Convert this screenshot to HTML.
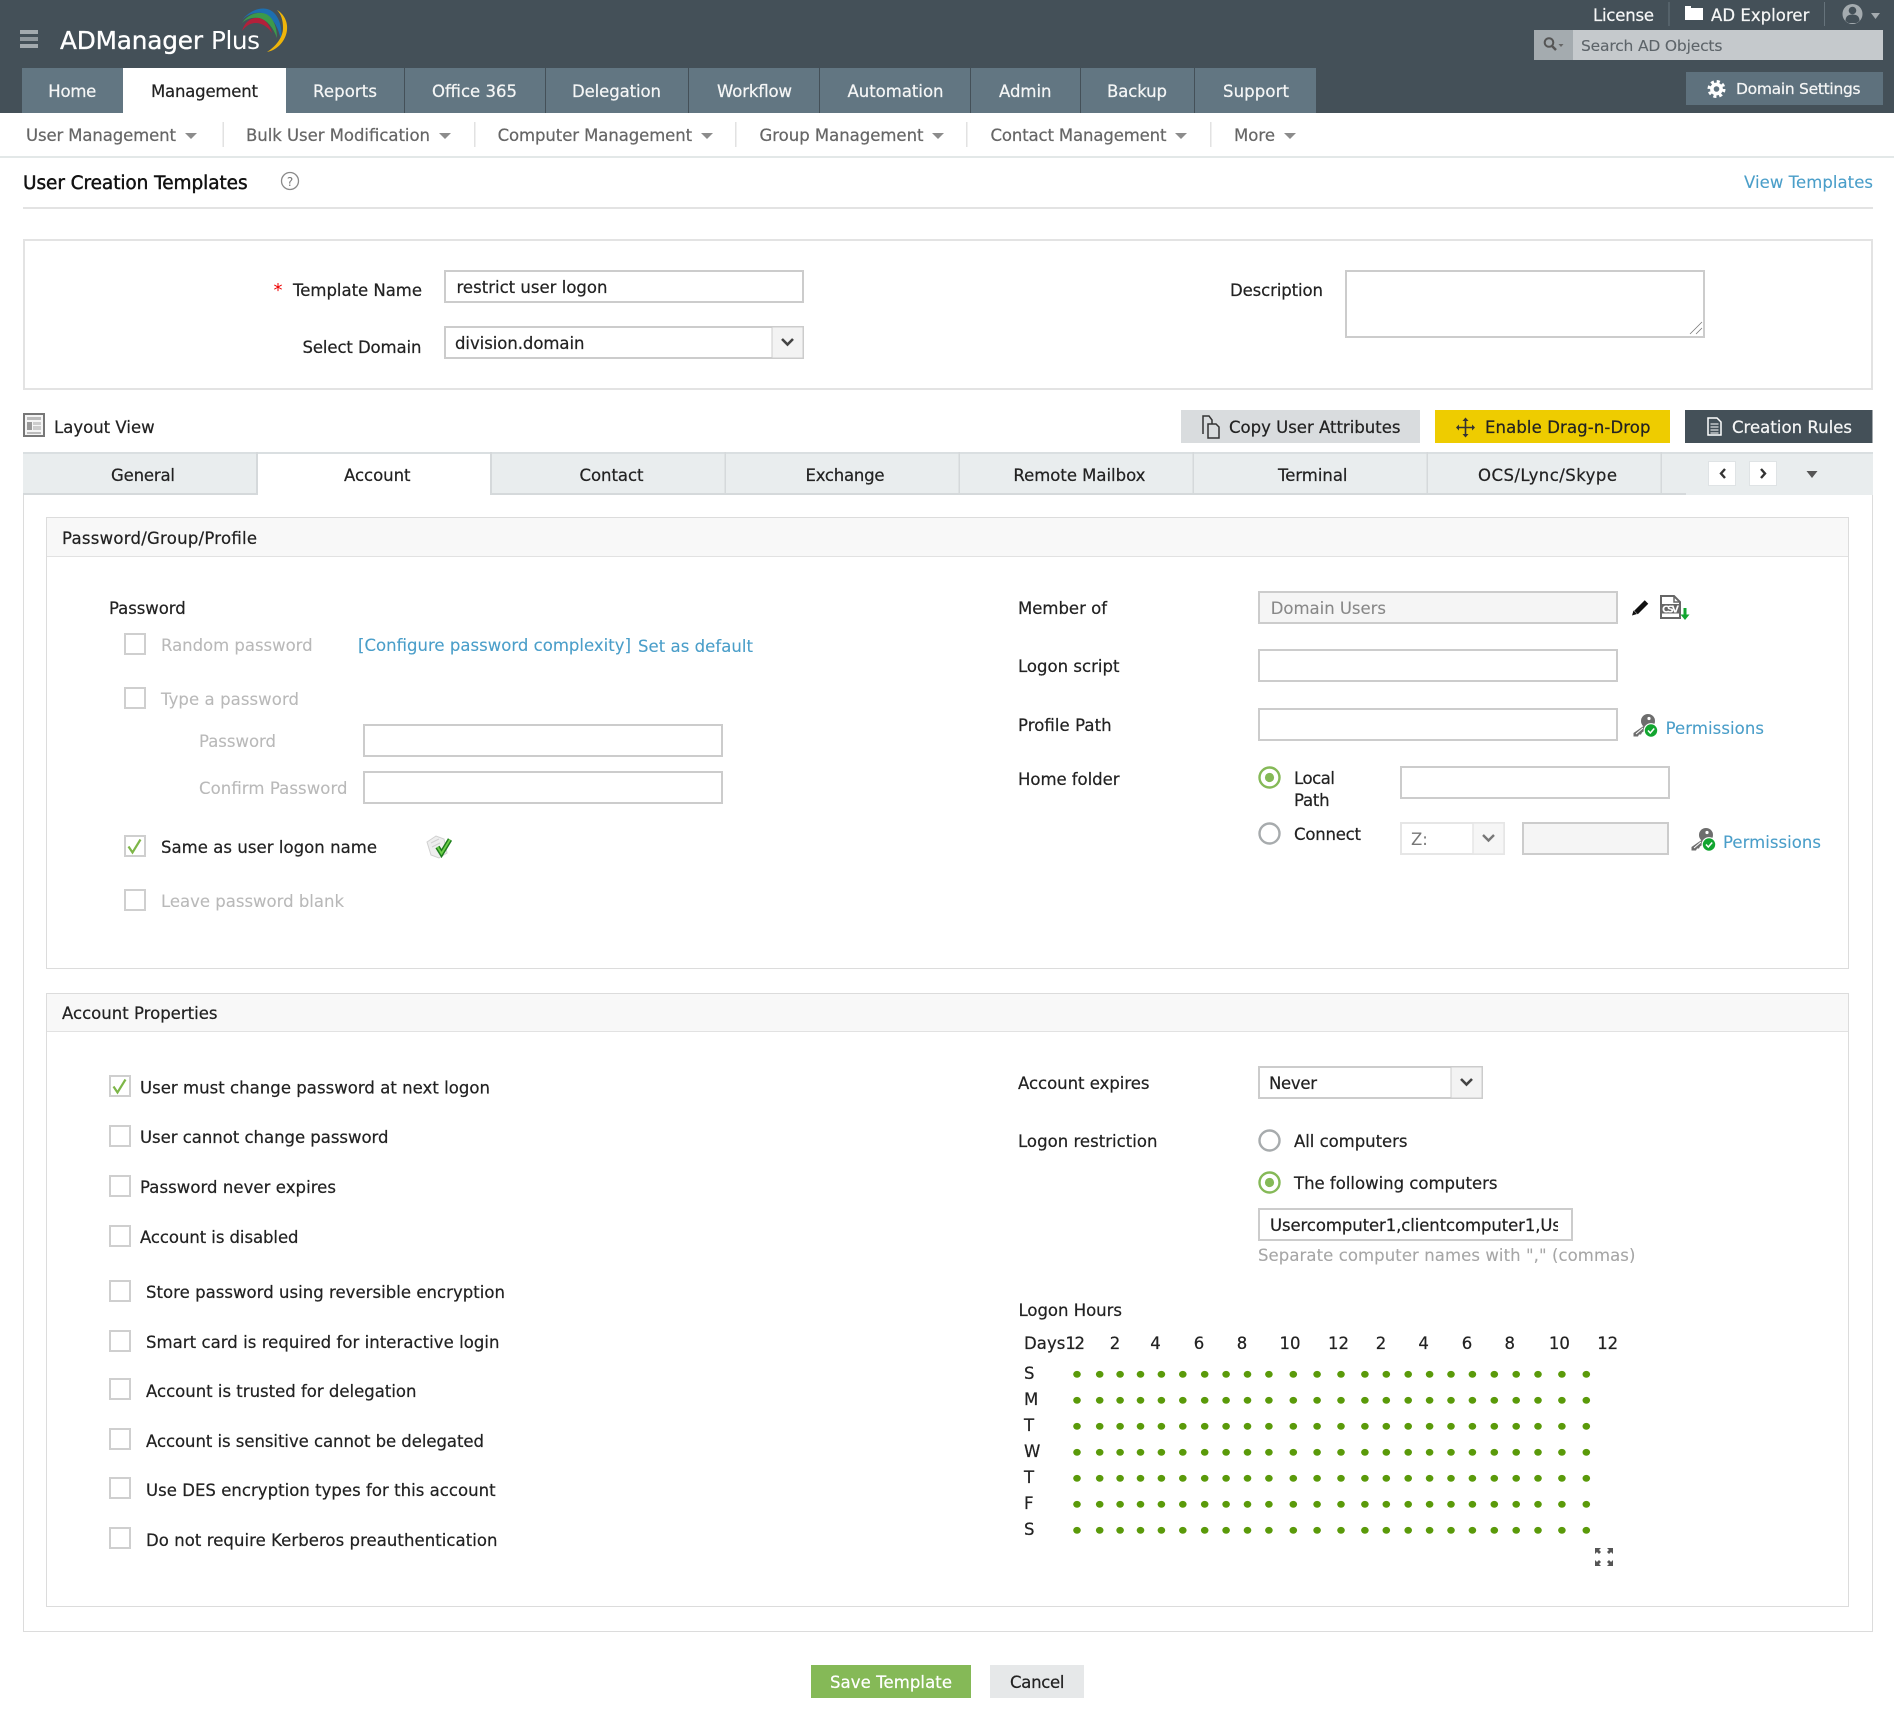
<!DOCTYPE html>
<html lang="en"><head><meta charset="utf-8"><title>User Creation Templates</title>
<style>
html,body{margin:0;padding:0;background:#fff;width:1894px;height:1728px;overflow:hidden}
svg{display:block}
text{font-family:"DejaVu Sans","Liberation Sans",sans-serif;font-size:16.5px;fill:#222;stroke:#222;stroke-width:.22px}
.w{fill:#fff;stroke:#fff}.g{fill:#666;stroke:#666}.d{fill:#b9b9b9;stroke:#b9b9b9;stroke-width:.1px}.b{fill:#4a9ec9;stroke:#4a9ec9;stroke-width:.1px}.h{fill:#f5f6f6;stroke:#f5f6f6}
.s{font-size:15.5px}
</style></head><body>
<svg xmlns="http://www.w3.org/2000/svg" width="1894" height="1728" viewBox="0 0 1894 1728">
<defs>
<g id="cb"><rect x="1" y="1" width="20" height="20" fill="#fff" stroke="#cfcfcf" stroke-width="2"/></g>
<g id="ck"><rect x="1" y="1" width="20" height="20" fill="#fff" stroke="#cfcfcf" stroke-width="2"/><path d="M4.500 11.500l4 6L16.500 4.500" fill="none" stroke="#7db648" stroke-width="2.200"/></g>
<g id="ro"><circle cx="11.500" cy="11.500" r="10" fill="#fff" stroke="#a7abad" stroke-width="2.400"/></g>
<g id="rs"><circle cx="11.500" cy="11.500" r="10" fill="#fff" stroke="#85b957" stroke-width="2.400"/><circle cx="11.500" cy="11.500" r="4.600" fill="#85b957"/></g>
<g id="key"><circle cx="16" cy="7" r="7" fill="#6d6d6d"/><circle cx="17" cy="4.500" r="1.600" fill="#fff"/><path d="M13 11L1.500 19v3.500H6l1-2h2l1-2 6-4z" fill="#6d6d6d"/><path d="M11 14l-7 6" stroke="#fff" stroke-width="1"/><circle cx="19" cy="16.500" r="6.800" fill="#12a530" stroke="#fff" stroke-width="1.200"/><path d="M16 16.500l2.300 2.500 3.900-4.500" fill="none" stroke="#fff" stroke-width="1.500"/></g>
<g id="r">
<ellipse cx="1077" rx="3.800" ry="3.400" fill="#5a9a0a"/><ellipse cx="1099.700" rx="3.800" ry="3.400" fill="#5a9a0a"/><ellipse cx="1120.100" rx="3.800" ry="3.400" fill="#5a9a0a"/><ellipse cx="1140.500" rx="3.800" ry="3.400" fill="#5a9a0a"/><ellipse cx="1161.400" rx="3.800" ry="3.400" fill="#5a9a0a"/><ellipse cx="1182.800" rx="3.800" ry="3.400" fill="#5a9a0a"/><ellipse cx="1204.700" rx="3.800" ry="3.400" fill="#5a9a0a"/><ellipse cx="1226.100" rx="3.800" ry="3.400" fill="#5a9a0a"/><ellipse cx="1247.500" rx="3.800" ry="3.400" fill="#5a9a0a"/><ellipse cx="1268.900" rx="3.800" ry="3.400" fill="#5a9a0a"/><ellipse cx="1293.300" rx="3.800" ry="3.400" fill="#5a9a0a"/><ellipse cx="1317.100" rx="3.800" ry="3.400" fill="#5a9a0a"/><ellipse cx="1341" rx="3.800" ry="3.400" fill="#5a9a0a"/><ellipse cx="1364.900" rx="3.800" ry="3.400" fill="#5a9a0a"/><ellipse cx="1386.300" rx="3.800" ry="3.400" fill="#5a9a0a"/><ellipse cx="1408.200" rx="3.800" ry="3.400" fill="#5a9a0a"/><ellipse cx="1429.600" rx="3.800" ry="3.400" fill="#5a9a0a"/><ellipse cx="1451" rx="3.800" ry="3.400" fill="#5a9a0a"/><ellipse cx="1472.400" rx="3.800" ry="3.400" fill="#5a9a0a"/><ellipse cx="1494.300" rx="3.800" ry="3.400" fill="#5a9a0a"/><ellipse cx="1516.200" rx="3.800" ry="3.400" fill="#5a9a0a"/><ellipse cx="1538" rx="3.800" ry="3.400" fill="#5a9a0a"/><ellipse cx="1561.900" rx="3.800" ry="3.400" fill="#5a9a0a"/><ellipse cx="1586.300" rx="3.800" ry="3.400" fill="#5a9a0a"/>
</g>
<clipPath id="cp"><rect x="1262" y="1210" width="296" height="29"/></clipPath>
</defs>

<!-- header -->
<rect width="1894" height="113" fill="#445058"/>
<rect x="20" y="30" width="18" height="4" fill="#a3aaae"/><rect x="20" y="37" width="18" height="4" fill="#8f979c"/><rect x="20" y="44" width="18" height="4" fill="#a3aaae"/>
<text x="60" y="49" textLength="143" style="font-size:24.700px;stroke-width:.35px" class="w">ADManager</text>
<text x="211" y="49" textLength="49" style="font-size:24.700px;stroke-width:0" class="w">Plus</text>
<path d="M242 20C250 10 262 6 270 10C278 14 283 26 281 40C278 26 272 16 262 13C254 12 247 15 242 20Z" fill="#1d6fb0"/>
<path d="M242 23C248 14 258 11 266 14C273 17 277 27 277 38C273 27 267 20 259 18C252 17 246 19 242 23Z" fill="#3b9a4b"/>
<path d="M242 31C245 21 252 17 259 18C265 19 270 25 272 33C268 27 262 23 256 23C250 23 246 26 242 31Z" fill="#b3203a"/>
<path d="M277 10C284 14 288 22 287 30C286 40 278 50 267 52C275 47 283 38 283 28C283 20 281 14 277 10Z" fill="#efb50a"/>

<rect x="22" y="68" width="101" height="45" fill="#627682"/><text x="48.300" y="97" textLength="48" class="h">Home</text>
<rect x="123" y="68" width="163" height="45" fill="#fff"/><text x="151" y="97" textLength="107">Management</text>
<rect x="286" y="68" width="118" height="45" fill="#627682"/><text x="313" y="97" textLength="64" class="h">Reports</text>
<rect x="405" y="68" width="140" height="45" fill="#627682"/><text x="432" y="97" textLength="85" class="h">Office 365</text>
<rect x="546" y="68" width="142" height="45" fill="#627682"/><text x="572" y="97" textLength="89" class="h">Delegation</text>
<rect x="689" y="68" width="130" height="45" fill="#627682"/><text x="717" y="97" textLength="75" class="h">Workflow</text>
<rect x="820" y="68" width="150" height="45" fill="#627682"/><text x="847.500" y="97" textLength="96" class="h">Automation</text>
<rect x="971" y="68" width="109" height="45" fill="#627682"/><text x="999" y="97" textLength="52.500" class="h">Admin</text>
<rect x="1081" y="68" width="113" height="45" fill="#627682"/><text x="1107" y="97" textLength="60" class="h">Backup</text>
<rect x="1195" y="68" width="121" height="45" fill="#627682"/><text x="1223" y="97" textLength="66" class="h">Support</text>

<text x="1593" y="21" textLength="61" class="h">License</text>
<rect x="1668.500" y="2" width="1" height="24" fill="#66737b"/>
<path d="M1685 6h6v2h12v12h-18z" fill="#fff"/>
<text x="1711" y="21" textLength="98.400" class="h">AD Explorer</text>
<rect x="1824" y="2" width="1" height="24" fill="#66737b"/>
<circle cx="1852.500" cy="14" r="10" fill="#a4abaf"/><circle cx="1852.500" cy="10.500" r="3.800" fill="#445058"/><path d="M1845.500 21c0-5 3-6.500 7-6.500s7 1.500 7 6.500l-3 2h-8z" fill="#445058"/>
<path d="M1871 13h9l-4.500 6z" fill="#a4abaf"/>
<rect x="1534" y="30" width="39" height="30" fill="#a4abaf"/><rect x="1573" y="30" width="310" height="30" fill="#c5c9cc"/>
<circle cx="1549" cy="42.500" r="4.300" fill="none" stroke="#555" stroke-width="2"/><path d="M1552 46l4 4" stroke="#555" stroke-width="2.500"/><path d="M1558.500 44h5l-2.500 3z" fill="#666"/>
<text x="1581" y="51" textLength="141.400" class="s" style="fill:#5d6469;stroke:#5d6469;stroke-width:.1px">Search AD Objects</text>
<rect x="1686" y="72" width="197" height="33" fill="#5e717d"/>
<circle cx="1716.500" cy="89" r="7.500" fill="none" stroke="#fff" stroke-width="3" stroke-dasharray="3.100 2.790"/><circle cx="1716.500" cy="89" r="4.600" fill="none" stroke="#fff" stroke-width="3.600"/>
<text x="1736" y="94" textLength="124.600" class="s h">Domain Settings</text>

<!-- subnav -->
<rect y="156" width="1894" height="2" fill="#e3e8e8"/>
<text x="26" y="141" textLength="150" class="g">User Management</text><path d="M185 133h12l-6 6z" fill="#8c8c8c"/>
<rect x="222.500" y="122" width="1.500" height="25" fill="#e2e2e2"/>
<text x="246" y="141" textLength="184" class="g">Bulk User Modification</text><path d="M439 133h12l-6 6z" fill="#8c8c8c"/>
<rect x="474" y="122" width="1.500" height="25" fill="#e2e2e2"/>
<text x="497.600" y="141" textLength="194.500" class="g">Computer Management</text><path d="M701 133h12l-6 6z" fill="#8c8c8c"/>
<rect x="735" y="122" width="1.500" height="25" fill="#e2e2e2"/>
<text x="759.500" y="141" textLength="164" class="g">Group Management</text><path d="M932 133h12l-6 6z" fill="#8c8c8c"/>
<rect x="966" y="122" width="1.500" height="25" fill="#e2e2e2"/>
<text x="990.500" y="141" textLength="176" class="g">Contact Management</text><path d="M1175 133h12l-6 6z" fill="#8c8c8c"/>
<rect x="1210" y="122" width="1.500" height="25" fill="#e2e2e2"/>
<text x="1234" y="141" textLength="41" class="g">More</text><path d="M1284 133h12l-6 6z" fill="#8c8c8c"/>

<!-- title -->
<text x="23" y="189" textLength="224.600" style="font-size:18.500px;fill:#111;stroke:#111;stroke-width:.45px">User Creation Templates</text>
<circle cx="290" cy="181" r="8.500" fill="#fff" stroke="#8a8a8a" stroke-width="1.300"/><text x="290" y="186" text-anchor="middle" style="font-size:12px;fill:#777;stroke:none">?</text>
<text x="1744" y="188" textLength="129" class="b">View Templates</text>
<rect x="23" y="207" width="1850" height="2" fill="#e3e3e3"/>

<!-- template box -->
<rect x="24" y="240" width="1848" height="149" fill="#fff" stroke="#e3e3e3" stroke-width="2"/>
<text x="273.500" y="296" style="font-size:18px;fill:#e00;stroke:none">*</text>
<text x="293" y="296" textLength="129">Template Name</text>
<rect x="445" y="271" width="358" height="31" fill="#fff" stroke="#ccc" stroke-width="2"/>
<text x="456.500" y="293" textLength="151">restrict user logon</text>
<text x="302.500" y="353" textLength="119">Select Domain</text>
<rect x="445" y="327" width="358" height="31" fill="#fff" stroke="#ccc" stroke-width="2"/>
<rect x="772" y="327" width="31" height="31" fill="#f3f3f3" stroke="#ccc" stroke-width="1"/>
<path d="M782 339l5.500 5.500 5.500-5.500" fill="none" stroke="#444" stroke-width="2.600"/>
<text x="455" y="349" textLength="129.500">division.domain</text>
<text x="1230" y="296" textLength="93">Description</text>
<rect x="1346" y="271" width="358" height="66" fill="#fff" stroke="#ccc" stroke-width="2"/>
<path d="M1690 334l12-12M1696 334l6-6" stroke="#777" stroke-width=".8"/>

<!-- toolbar -->
<rect x="24" y="414" width="20" height="22" fill="#f5f5f5" stroke="#777" stroke-width="2"/>
<rect x="27" y="417" width="14" height="3" fill="#bbb"/><rect x="27" y="422" width="5" height="8" fill="#999"/><rect x="33" y="422" width="8" height="3" fill="#ccc"/><rect x="33" y="426" width="8" height="4" fill="#ccc"/><rect x="27" y="432" width="14" height="2" fill="#bbb"/>
<text x="54" y="433" textLength="100.600">Layout View</text>
<rect x="1181" y="410" width="239" height="33" fill="#d9dcde"/>
<path d="M1203 434v-18h6l3 4v4M1208 424h8l3 3v11h-11z" fill="#d9dcde" stroke="#333" stroke-width="1.500"/>
<text x="1229" y="433" textLength="171.500">Copy User Attributes</text>
<rect x="1435" y="410" width="235" height="33" fill="#eecc00"/>
<path d="M1465.500 419v17M1457 427.500h17" stroke="#333" stroke-width="1.600"/><path d="M1462.500 421l3-3.500 3 3.500zM1462.500 434l3 3.500 3-3.500zM1459 424.500l-3 3 3 3zM1472 424.500l3 3-3 3z" fill="#333"/>
<text x="1485" y="433" textLength="165.500">Enable Drag-n-Drop</text>
<rect x="1685" y="410" width="187.500" height="33" fill="#445058"/>
<path d="M1708 418h9l4 4v13h-13z" fill="#445058" stroke="#fff" stroke-width="1.500"/><path d="M1710.500 424h8M1710.500 427h8M1710.500 430h8M1710.500 433h8" stroke="#fff" stroke-width="1"/>
<text x="1732" y="433" textLength="120" class="h">Creation Rules</text>

<!-- main panel -->
<rect x="23.500" y="452.500" width="1849" height="1179" fill="#fff" stroke="#dcdcdc"/>
<rect x="23" y="452" width="1850" height="43" fill="#e9edee"/>
<rect x="23" y="452" width="1850" height="2" fill="#dadfe1"/>
<rect x="23" y="493" width="1663" height="2" fill="#d5d9db"/>
<rect x="257" y="454" width="234" height="41" fill="#fff"/>
<rect x="256" y="452" width="2" height="43" fill="#d5d9db"/><rect x="490" y="452" width="2" height="43" fill="#d5d9db"/>
<rect x="724.500" y="452" width="1.500" height="43" fill="#d5d9db"/><rect x="958.500" y="452" width="1.500" height="43" fill="#d5d9db"/><rect x="1192.500" y="452" width="1.500" height="43" fill="#d5d9db"/><rect x="1426.500" y="452" width="1.500" height="43" fill="#d5d9db"/><rect x="1660.500" y="452" width="1.500" height="43" fill="#d5d9db"/>
<text x="111" y="481" textLength="64">General</text>
<text x="344" y="481" textLength="66.500">Account</text>
<text x="579.500" y="481" textLength="64">Contact</text>
<text x="805.500" y="481" textLength="79">Exchange</text>
<text x="1013.400" y="481" textLength="132">Remote Mailbox</text>
<text x="1278" y="481" textLength="69.500">Terminal</text>
<text x="1478" y="481" textLength="139">OCS/Lync/Skype</text>
<rect x="1708.500" y="461.500" width="27" height="24" fill="#fff" stroke="#dfe3e5"/>
<path d="M1725 469l-4 4.500 4 4.500" fill="none" stroke="#333" stroke-width="2.400"/>
<rect x="1749.500" y="461.500" width="27" height="24" fill="#fff" stroke="#dfe3e5"/>
<path d="M1761 469l4 4.500-4 4.500" fill="none" stroke="#333" stroke-width="2.400"/>
<path d="M1806.500 471h11l-5.500 7z" fill="#555"/>

<!-- section 1 -->
<rect x="46.500" y="517.500" width="1802" height="451" fill="#fff" stroke="#dcdcdc"/>
<rect x="47" y="518" width="1801" height="38" fill="#f8f8f8"/><rect x="47" y="556" width="1801" height="1" fill="#e2e2e2"/>
<text x="62" y="544" textLength="195">Password/Group/Profile</text>

<text x="109" y="614" textLength="76.700">Password</text>
<use href="#cb" x="124" y="633"/><text x="161" y="651" textLength="151.600" class="d">Random password</text>
<text x="358" y="651" textLength="273" class="b">[Configure password complexity]</text>
<text x="638" y="652" textLength="115" class="b">Set as default</text>
<use href="#cb" x="124" y="687"/><text x="161" y="705" textLength="138" class="d">Type a password</text>
<text x="199" y="747" textLength="77" class="d">Password</text>
<rect x="364" y="725" width="358" height="31" fill="#fff" stroke="#ccc" stroke-width="2"/>
<text x="199" y="794" textLength="148.500" class="d">Confirm Password</text>
<rect x="364" y="772" width="358" height="31" fill="#fff" stroke="#ccc" stroke-width="2"/>
<use href="#ck" x="124" y="835"/><text x="161" y="853" textLength="216">Same as user logon name</text>
<path d="M427 842l9-6 8 3 3 14-8 5-8-3z" fill="#eee" stroke="#d0d0d0"/><path d="M431 843l8-4M432 847l8-4" stroke="#d0d0d0"/>
<path d="M437.500 847l4 6.500 8.500-14" fill="none" stroke="#1d7d1d" stroke-width="4.800"/>
<path d="M437.500 847l4 6.500 8.500-14" fill="none" stroke="#6fd04a" stroke-width="1.800"/>
<use href="#cb" x="124" y="889"/><text x="161" y="907" textLength="183" class="d">Leave password blank</text>

<text x="1018" y="614" textLength="89">Member of</text>
<rect x="1259" y="592" width="358" height="31" fill="#f5f5f5" stroke="#ccc" stroke-width="2"/>
<text x="1270.700" y="614" textLength="115.300" style="fill:#888;stroke:#888;stroke-width:.1px">Domain Users</text>
<path d="M1636 612.500l10.500-10.500" stroke="#111" stroke-width="5"/><path d="M1632 615.500l1.500-5 3.500 3.500z" fill="#111"/>
<path d="M1661 596h13l6 6v16h-19z" fill="#fff" stroke="#666" stroke-width="2"/><path d="M1674 596v6h6" fill="none" stroke="#666" stroke-width="1.500"/><rect x="1660" y="604" width="21" height="9.500" fill="#666"/><text x="1670.500" y="612.700" text-anchor="middle" textLength="17" style="font-size:9.500px;font-weight:bold;fill:#fff;stroke:none">CSV</text>
<path d="M1685 608v8" stroke="#12a530" stroke-width="3"/><path d="M1680.500 614.500h9l-4.500 5.500z" fill="#12a530"/>

<text x="1018" y="672" textLength="101.500">Logon script</text>
<rect x="1259" y="650" width="358" height="31" fill="#fff" stroke="#ccc" stroke-width="2"/>
<text x="1018" y="731" textLength="93.600">Profile Path</text>
<rect x="1259" y="709" width="358" height="31" fill="#fff" stroke="#ccc" stroke-width="2"/>
<use href="#key" x="1632" y="714"/>
<text x="1665.600" y="734" textLength="98.400" class="b">Permissions</text>
<text x="1018" y="785" textLength="101.500">Home folder</text>
<use href="#rs" x="1258" y="766"/>
<text x="1294" y="784" textLength="41">Local</text><text x="1294" y="806" textLength="35.600">Path</text>
<rect x="1401" y="767" width="268" height="31" fill="#fff" stroke="#ccc" stroke-width="2"/>
<use href="#ro" x="1258" y="822"/>
<text x="1294" y="840" textLength="67">Connect</text>
<rect x="1401" y="823" width="103" height="31" fill="#fff" stroke="#e6e6e6" stroke-width="2"/>
<rect x="1473" y="823" width="31" height="31" fill="#f6f6f6" stroke="#e6e6e6" stroke-width="1.500"/>
<path d="M1483 835l5.500 5.500 5.500-5.500" fill="none" stroke="#777" stroke-width="2.400"/>
<text x="1411" y="845" style="fill:#777;stroke:none">Z:</text>
<rect x="1523" y="823" width="145" height="31" fill="#f5f5f5" stroke="#ccc" stroke-width="2"/>
<use href="#key" x="1690" y="828"/>
<text x="1723" y="848" textLength="98" class="b">Permissions</text>

<!-- section 2 -->
<rect x="46.500" y="993.500" width="1802" height="613" fill="#fff" stroke="#dcdcdc"/>
<rect x="47" y="994" width="1801" height="38" fill="#f8f8f8"/><rect x="47" y="1031" width="1801" height="1" fill="#e2e2e2"/>
<text x="62" y="1019" textLength="155.500">Account Properties</text>

<use href="#ck" x="109" y="1075"/><text x="140" y="1093.500" textLength="350">User must change password at next logon</text>
<use href="#cb" x="109" y="1125"/><text x="140" y="1143" textLength="248.500">User cannot change password</text>
<use href="#cb" x="109" y="1175"/><text x="140" y="1193" textLength="196">Password never expires</text>
<use href="#cb" x="109" y="1225"/><text x="140" y="1243" textLength="158.500">Account is disabled</text>
<use href="#cb" x="109" y="1280"/><text x="146" y="1298" textLength="359">Store password using reversible encryption</text>
<use href="#cb" x="109" y="1330"/><text x="146" y="1348" textLength="353.500">Smart card is required for interactive login</text>
<use href="#cb" x="109" y="1378"/><text x="146" y="1397" textLength="270.500">Account is trusted for delegation</text>
<use href="#cb" x="109" y="1428"/><text x="146" y="1447" textLength="338">Account is sensitive cannot be delegated</text>
<use href="#cb" x="109" y="1477"/><text x="146" y="1496" textLength="349.600">Use DES encryption types for this account</text>
<use href="#cb" x="109" y="1527"/><text x="146" y="1546" textLength="351.500">Do not require Kerberos preauthentication</text>

<text x="1018" y="1089" textLength="131.500">Account expires</text>
<rect x="1259" y="1067" width="223" height="31" fill="#fff" stroke="#ccc" stroke-width="2"/>
<rect x="1451" y="1067" width="31" height="31" fill="#f3f3f3" stroke="#ccc" stroke-width="1"/>
<path d="M1461 1079l5.500 5.500 5.500-5.500" fill="none" stroke="#444" stroke-width="2.600"/>
<text x="1269" y="1089" textLength="48">Never</text>
<text x="1018" y="1147" textLength="139.500">Logon restriction</text>
<use href="#ro" x="1258" y="1129"/><text x="1294" y="1147" textLength="113.500">All computers</text>
<use href="#rs" x="1258" y="1171"/><text x="1294" y="1189" textLength="203.500">The following computers</text>
<rect x="1259" y="1209" width="313" height="31" fill="#fff" stroke="#ccc" stroke-width="2"/>
<text x="1270" y="1231" textLength="291" clip-path="url(#cp)">Usercomputer1,clientcomputer1,Us</text>
<text x="1258" y="1261" textLength="377.400" style="fill:#a6a6a6;stroke:#a6a6a6;stroke-width:.1px">Separate computer names with "," (commas)</text>

<text x="1018.500" y="1316" textLength="103.500">Logon Hours</text>
<text x="1024" y="1349" textLength="41.400">Days</text>
<text x="1065.400" y="1349" textLength="19.600">12</text>
<g text-anchor="middle">
<text x="1115" y="1349">2</text><text x="1155.500" y="1349">4</text><text x="1199" y="1349">6</text><text x="1242" y="1349">8</text><text x="1290" y="1349">10</text><text x="1338.500" y="1349">12</text><text x="1381" y="1349">2</text><text x="1423.600" y="1349">4</text><text x="1467" y="1349">6</text><text x="1509.700" y="1349">8</text><text x="1559.400" y="1349">10</text><text x="1607.700" y="1349">12</text>
</g>
<text x="1024" y="1379">S</text><text x="1024" y="1405">M</text><text x="1024" y="1431">T</text><text x="1024" y="1457">W</text><text x="1024" y="1483">T</text><text x="1024" y="1509">F</text><text x="1024" y="1535">S</text>
<use href="#r" y="1374.300"/><use href="#r" y="1400.300"/><use href="#r" y="1426.300"/><use href="#r" y="1452.300"/><use href="#r" y="1478.300"/><use href="#r" y="1504.300"/><use href="#r" y="1530.300"/>
<path d="M1595 1548h6l-2 2 2 2-2 2-2-2-2 2zM1613 1548h-6l2 2-2 2 2 2 2-2 2 2zM1595 1566h6l-2-2 2-2-2-2-2 2-2-2zM1613 1566h-6l2-2-2-2 2-2 2 2 2-2z" fill="#555"/>

<!-- footer -->
<rect x="811" y="1665" width="160" height="33" fill="#85b957"/>
<text x="830" y="1688" textLength="122" class="w">Save Template</text>
<rect x="990" y="1665" width="94" height="33" fill="#e6e8e9"/>
<text x="1010" y="1688" textLength="54.500">Cancel</text>
</svg>
</body></html>
